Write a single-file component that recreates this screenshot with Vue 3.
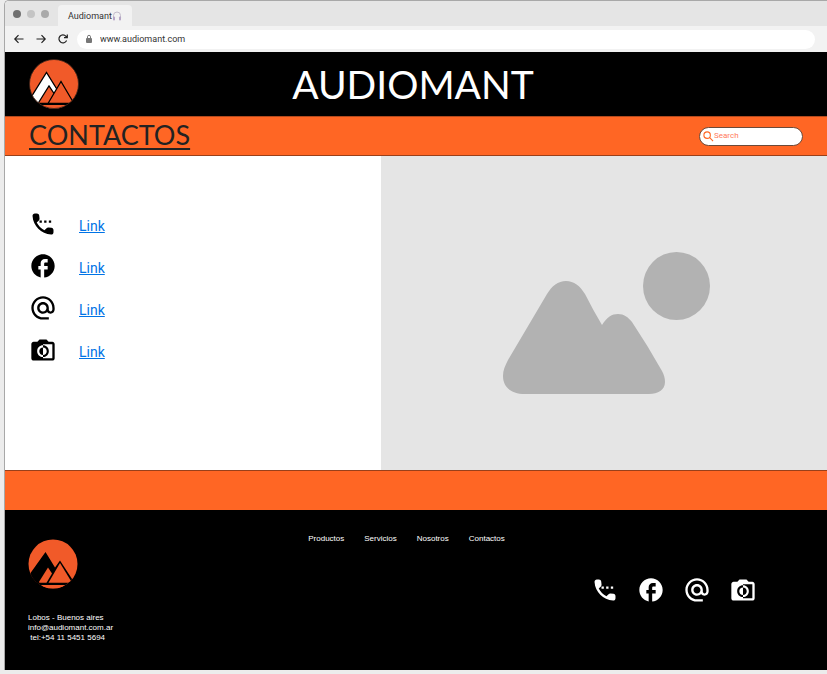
<script setup>
import { ref } from 'vue'

const search = ref('')
const address = ref('www.audiomant.com')

const channels = [
  {
    name: 'Teléfono',
    path: 'M11 9H9v2h2V9zm4 0h-2v2h2V9zm2 0v2h2V9h-2zm2.23 6.26l-2.54-.29c-.61-.07-1.21.14-1.64.57l-1.84 1.84c-2.83-1.44-5.15-3.75-6.59-6.59l1.85-1.85c.43-.43.64-1.03.57-1.64l-.29-2.52C8.63 3.77 7.78 3.01 6.76 3.01H5.03c-1.13 0-2.07.94-2 2.07.53 8.54 7.36 15.36 15.89 15.89 1.13.07 2.07-.87 2.07-2v-1.73c.01-1.01-.75-1.86-1.76-1.98z'
  },
  {
    name: 'Facebook',
    path: 'M22 12c0-5.52-4.48-10-10-10S2 6.48 2 12c0 4.84 3.44 8.87 8 9.8V15H8v-3h2V9.5C10 7.57 11.57 6 13.5 6H16v3h-2c-.55 0-1 .45-1 1v2h3v3h-3v6.95c5.05-.5 9-4.76 9-9.95z'
  },
  {
    name: 'Correo',
    path: 'M12 1.95c-5.52 0-10 4.48-10 10s4.48 10 10 10h5v-2h-5c-4.34 0-8-3.66-8-8s3.66-8 8-8 8 3.66 8 8v1.43c0 .79-.71 1.57-1.5 1.57s-1.5-.78-1.5-1.57v-1.43c0-2.76-2.24-5-5-5s-5 2.24-5 5 2.24 5 5 5c1.38 0 2.64-.56 3.54-1.47.65.89 1.77 1.47 2.96 1.47 1.97 0 3.5-1.6 3.5-3.57v-1.43c0-5.52-4.48-10-10-10zm0 13c-1.66 0-3-1.34-3-3s1.34-3 3-3 3 1.34 3 3-1.34 3-3 3z'
  },
  {
    name: 'Fotos',
    path: 'M20 5h-3.2L15 3H9L7.2 5H4c-1.1 0-2 .9-2 2v12c0 1.1.9 2 2 2h16c1.1 0 2-.9 2-2V7c0-1.1-.9-2-2-2zm0 14h-8v-1c-2.8 0-5-2.2-5-5s2.2-5 5-5V7h8v12zm-3-6c0-2.8-2.2-5-5-5v1.8c1.8 0 3.2 1.4 3.2 3.2s-1.4 3.2-3.2 3.2V18c2.8 0 5-2.2 5-5zm-8.2 0c0 1.8 1.4 3.2 3.2 3.2V9.8c-1.8 0-3.2 1.4-3.2 3.2z'
  }
]

const pages = ['Productos', 'Servicios', 'Nosotros', 'Contactos']
</script>

<template>
  <div class="window">
    <div class="tabs">
      <span class="dot dark"></span>
      <span class="dot light"></span>
      <span class="dot"></span>
      <div class="tab">
        <span>Audiomant</span>
        <svg class="phones" viewBox="0 0 10 10" aria-hidden="true">
          <path d="M1.5 7V4.5a3.5 3.5 0 0 1 7 0V7" fill="none" stroke="#c3bccb" stroke-width="1" />
          <rect x="1" y="5.5" width="2" height="4" rx="1" fill="#b5a5c6" />
          <rect x="7" y="5.5" width="2" height="4" rx="1" fill="#b5a5c6" />
        </svg>
      </div>
    </div>

    <div class="toolbar">
      <button type="button" aria-label="Atrás">
        <svg viewBox="0 0 12 12"><path d="M10.5 6H2M5.500 2.200L1.800 6l3.700 3.800" /></svg>
      </button>
      <button type="button" aria-label="Adelante">
        <svg viewBox="0 0 12 12"><path d="M1.500 6H10M6.500 2.200L10.200 6l-3.700 3.800" /></svg>
      </button>
      <button type="button" aria-label="Recargar">
        <svg viewBox="0 0 12 12"><path d="M9.600 7.500A4 4 0 1 1 9 3.300L10 4.500M10.300 1.500v3.200H7" /></svg>
      </button>
      <label class="address">
        <svg viewBox="0 0 8 10" aria-hidden="true">
          <rect x="1" y="4" width="6" height="5" rx="1" fill="#777" />
          <path d="M2.500 4V2.800a1.500 1.500 0 0 1 3 0V4" fill="none" stroke="#777" />
        </svg>
        <input v-model="address" type="text" aria-label="Dirección" />
      </label>
    </div>

    <header class="banner">
      <svg class="logo" viewBox="0 0 50 50" role="img" aria-label="Logo">
        <defs><clipPath id="disc"><circle cx="25" cy="25" r="24.500" /></clipPath></defs>
        <circle cx="25" cy="25" r="24.500" fill="#f15a29" />
        <g clip-path="url(#disc)" stroke="#000" stroke-width="1.300">
          <path d="M-1 43L17.500 13.500L29 32L20 46H-1z" fill="#fff" />
          <path d="M9 44.500L20 27L26 36L21 44.500z" fill="#f15a29" />
          <path d="M19 44.500L32 22.500L45 44.500z" fill="#f15a29" />
          <path d="M8 45H44" fill="none" stroke-width="2" />
          <path d="M5 46H45L40 50H10z" fill="#f15a29" stroke="none" />
        </g>
        <circle cx="25" cy="25" r="24.500" fill="none" stroke="#3a241b" stroke-width="0.800" />
      </svg>
      <h1>AUDIOMANT</h1>
    </header>

    <div class="heading">
      <h2>CONTACTOS</h2>
      <label class="search">
        <svg viewBox="0 0 12 12" aria-hidden="true">
          <circle cx="4.500" cy="4.500" r="3.500" /><path d="M7 7l4 4" />
        </svg>
        <input v-model="search" type="search" placeholder="Search" aria-label="Search" />
      </label>
    </div>

    <main>
      <ul class="contacts">
        <li v-for="channel in channels" :key="channel.name">
          <svg class="icon" viewBox="0 0 24 24" aria-hidden="true"><path :d="channel.path" /></svg>
          <a href="#">Link</a>
        </li>
      </ul>
      <div class="picture">
        <svg viewBox="0 0 446 314" role="img" aria-label="Imagen">
          <path d="M144 238C129 238 122 230 122 220C122 214 124 210 127 204L166 138C171 130 177 125 185 125C193 125 199 130 204 138Q212 154 221 169C226 161 231 158 237 158C243 158 247 161 251 166Q267 190 281 215C283 219 284 222 284 226C284 234 277 238 268 238z" />
          <ellipse cx="295.500" cy="130" rx="33.500" ry="34" />
        </svg>
      </div>
    </main>

    <div class="stripe"></div>

    <footer>
      <div class="company">
        <svg class="logo" viewBox="0 0 50 50" role="img" aria-label="Logo">
          <defs><clipPath id="disc-small"><circle cx="25" cy="25" r="24.500" /></clipPath></defs>
          <circle cx="25" cy="25" r="24.500" fill="#f15a29" />
          <g clip-path="url(#disc-small)">
            <path d="M-1 39L17.500 13L27 28.500L32 21.500L46 43L43 46.500H12L0 46z" fill="#000" />
            <path d="M10.500 43.800L20 28.500L24 34.500L18.500 43.800z" fill="#f15a29" />
            <path d="M20.500 43.800L32 24L43 42L40.500 43.800z" fill="#f15a29" />
            <path d="M0 36H4L14 46.500V50H0z" fill="#000" />
            <path d="M12 46H38Q32 49.500 25 49.500T12 46z" fill="#f15a29" />
          </g>
        </svg>
        <address>
          <span>Lobos - Buenos aires</span>
          <span>info@audiomant.com.ar</span>
          <span>&nbsp;tel:+54 11 5451 5694</span>
        </address>
      </div>
      <nav>
        <a v-for="page in pages" :key="page" href="#">{{ page }}</a>
      </nav>
      <div class="social">
        <a v-for="channel in channels" :key="channel.name" href="#" :aria-label="channel.name">
          <svg class="icon" viewBox="0 0 24 24" aria-hidden="true"><path :d="channel.path" /></svg>
        </a>
      </div>
    </footer>
  </div>
</template>

<style>
body {
  margin: 0;
  background: #ececec;
}
</style>

<style scoped>
* {
  box-sizing: border-box;
}

.window {
  margin: 0 0 4px 4px;
  border-top: 1px solid #a8a8a8;
  border-left: 1px solid #a8a8a8;
  border-top-left-radius: 5px;
  background: #fff;
  font-family: "Liberation Sans", Arial, sans-serif;
  overflow: hidden;
}

.tabs {
  display: flex;
  align-items: center;
  gap: 6px;
  height: 25px;
  padding-left: 8px;
  background: #e5e5e5;
}

.dot {
  width: 8px;
  height: 8px;
  border-radius: 50%;
  background: #a9a9a9;
}

.dot.dark {
  background: #707070;
}

.dot.light {
  background: #c4c4c4;
}

.tab {
  display: flex;
  align-self: flex-end;
  align-items: center;
  height: 21px;
  margin-left: 3px;
  padding: 0 10px;
  border-radius: 4px 4px 0 0;
  background: #f2f2f2;
  color: #333;
  font: 9px/20px Roboto, sans-serif;
}

.phones {
  width: 10px;
  height: 10px;
}

.toolbar {
  display: flex;
  align-items: center;
  height: 26px;
  padding: 0 12px 0 3px;
  background: #f2f2f2;
}

.toolbar button {
  display: flex;
  padding: 0 5px;
  border: 0;
  background: none;
}

.toolbar button svg {
  width: 12px;
  height: 12px;
  fill: none;
  stroke: #222;
  stroke-width: 1.2;
}

.address {
  display: flex;
  flex: 1;
  align-items: center;
  gap: 7px;
  height: 19px;
  margin-left: 3px;
  padding: 0 8px;
  border-radius: 10px;
  background: #fff;
}

.address svg {
  width: 8px;
  height: 10px;
}

input {
  flex: 1;
  min-width: 0;
  padding: 0;
  border: 0;
  outline: 0;
  background: none;
}

.address input {
  color: #333;
  font: 9px/18px Roboto, sans-serif;
}

.banner {
  display: grid;
  grid-template-columns: 1fr auto 1fr;
  align-items: center;
  height: 64px;
  padding: 0 30px 0 24px;
  background: #000;
}

.logo {
  display: block;
  width: 50px;
  height: 50px;
}

h1,
h2 {
  margin: 0;
  font-family: Lato, sans-serif;
  font-weight: 400;
}

h1 {
  color: #fff;
  font-size: 39px;
  line-height: 64px;
}

.heading {
  display: flex;
  align-items: center;
  justify-content: space-between;
  height: 40px;
  padding: 0 24px;
  border-top: 1px solid #b34a1e;
  border-bottom: 1px solid #99401a;
  background: #ff6624;
}

h2 {
  padding-bottom: 3px;
  color: #222;
  font-size: 27px;
  line-height: 34px;
  text-decoration: underline;
  text-decoration-thickness: 2px;
  text-underline-offset: 3px;
  text-decoration-skip-ink: none;
}

.search {
  display: flex;
  align-items: center;
  width: 104px;
  height: 19px;
  padding: 0 8px 0 3px;
  border: 1px solid #6b4a3a;
  border-radius: 10px;
  background: #fff;
}

.search svg {
  width: 11px;
  height: 11px;
  fill: none;
  stroke: #ff6624;
  stroke-width: 1.2;
}

.search input {
  appearance: none;
  color: #ff6624;
  font: 8px/16px Roboto, sans-serif;
}

.search input::placeholder {
  color: #ff7a5c;
  opacity: 1;
}

main {
  display: grid;
  grid-template-columns: 376fr 446fr;
  min-height: 314px;
}

.contacts {
  display: flex;
  flex-direction: column;
  gap: 14px;
  margin: 0;
  padding: 54px 24px 0;
  list-style: none;
}

.contacts li {
  display: flex;
  align-items: center;
  gap: 22px;
}

.icon {
  display: block;
  width: 28px;
  height: 28px;
  fill: currentColor;
}

.contacts a {
  padding-top: 3px;
  color: #0073e6;
  font: 14px/20px Roboto, sans-serif;
  text-decoration-thickness: 1px;
}

.picture {
  display: flex;
  background: #e5e5e5;
}

.picture svg {
  width: 100%;
  fill: #b2b2b2;
}

.stripe {
  height: 40px;
  border-top: 1px solid #99401a;
  background: #ff6624;
}

footer {
  display: grid;
  grid-template-columns: 1fr auto 1fr;
  height: 160px;
  padding: 0 70px 0 23px;
  background: #000;
  color: #fff;
  font-size: 8px;
  line-height: 10px;
}

.company {
  padding-top: 29px;
}

address {
  display: grid;
  margin-top: 24px;
  font-style: normal;
}

nav {
  display: flex;
  gap: 20px;
  padding: 24px 0 0 28px;
}

nav a,
.social a {
  color: inherit;
  text-decoration: none;
}

.social {
  display: flex;
  justify-content: flex-end;
  gap: 18px;
  padding-top: 66px;
}
</style>
